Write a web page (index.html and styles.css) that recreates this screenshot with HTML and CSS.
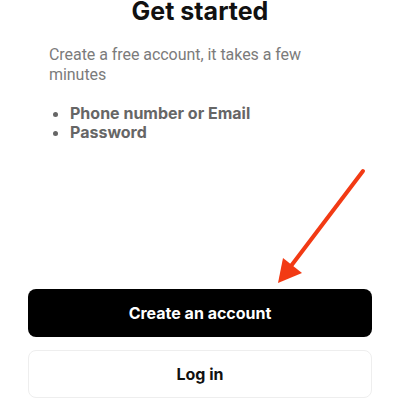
FILE: index.html
```html
<!DOCTYPE html>
<html>
<head>
<meta charset="utf-8">
<link rel="stylesheet" href="styles.css">
</head>
<body>
<div class="screen">
  <h1 class="title">Get started</h1>
  <p class="lead">Create a free account, it takes a few minutes</p>
  <ul class="needs">
    <li>Phone number or Email</li>
    <li>Password</li>
  </ul>
  <div class="spacer"></div>
  <div class="actions">
    <button class="btn btn-primary">Create an account</button>
    <button class="btn btn-secondary">Log in</button>
  </div>
  <svg class="arrow" width="400" height="400" viewBox="0 0 400 400">
    <line x1="363" y1="171" x2="291" y2="266" stroke="#f23a14" stroke-width="4" stroke-linecap="round"/>
    <polygon points="278,283 283,258 302,273" fill="#f23a14"/>
  </svg>
</div>
</body>
</html>
```
FILE: styles.css
```css
html, body {
  margin: 0;
  padding: 0;
  background: #fff;
}
.screen {
  position: relative;
  width: 400px;
  height: 400px;
  overflow: hidden;
  display: flex;
  flex-direction: column;
  padding: 0 28px;
  box-sizing: border-box;
  font-family: Inter, "Noto Sans", sans-serif;
}
.title {
  margin: -4px 0 0;
  font-size: 25px;
  line-height: 30px;
  font-weight: 700;
  text-align: center;
  color: #111;
}
.lead {
  margin: 19px 0 0;
  padding: 0 0 0 21px;
  font-family: Roboto, "Noto Sans", sans-serif;
  font-size: 16px;
  letter-spacing: -0.05px;
  line-height: 20px;
  color: #7b7b7b;
  width: 280px;
}
.needs {
  margin: 19px 0 0;
  padding: 0 0 0 42px;
  font-size: 16px;
  line-height: 19px;
  font-weight: 700;
  color: #666;
}
.spacer {
  flex: 1;
}
.actions {
  display: flex;
  flex-direction: column;
  gap: 13px;
  padding-bottom: 2px;
}
.btn {
  height: 48px;
  border-radius: 8px;
  font-family: inherit;
  font-size: 16px;
  font-weight: 700;
  cursor: pointer;
}
.btn-primary {
  background: #000;
  color: #fff;
  border: none;
}
.btn-secondary {
  background: #fff;
  color: #111;
  border: 1px solid #eeeeee;
}
.arrow {
  position: absolute;
  left: 0;
  top: 0;
  pointer-events: none;
}
```
